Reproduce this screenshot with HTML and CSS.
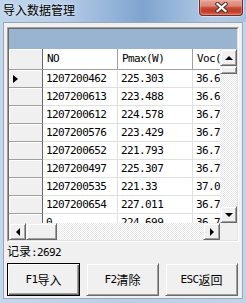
FILE: index.html
```html
<!DOCTYPE html>
<html>
<head>
<meta charset="utf-8">
<title>导入数据管理</title>
<link rel="stylesheet" href="styles.css">
</head>
<body>
<div class="window">
  <div class="titlebar">
    <span class="title">导入数据管理</span>
    <div class="close">
      <svg width="13" height="11" viewBox="0 0 13 11">
        <path d="M2.5 2l8 7M10.5 2l-8 7" stroke="#4a302c" stroke-width="4.2" stroke-linecap="square"/>
        <path d="M2.5 2l8 7M10.5 2l-8 7" stroke="#fff" stroke-width="2.2" stroke-linecap="square"/>
      </svg>
    </div>
  </div>
  <div class="client">
    <div class="grid">
      <div class="grid-in">
        <div class="caption"></div>
        <div class="main">
          <div class="rows">
            <div class="row head">
              <div class="rh"></div>
              <div class="c">NO</div>
              <div class="c">Pmax(W)</div>
              <div class="c">Voc(V)</div>
            </div>
            <div class="row"><div class="rh"><span class="mark"></span></div><div class="c">1207200462</div><div class="c">225.303</div><div class="c">36.69</div></div>
            <div class="row"><div class="rh"></div><div class="c">1207200613</div><div class="c">223.488</div><div class="c">36.62</div></div>
            <div class="row"><div class="rh"></div><div class="c">1207200612</div><div class="c">224.578</div><div class="c">36.72</div></div>
            <div class="row"><div class="rh"></div><div class="c">1207200576</div><div class="c">223.429</div><div class="c">36.74</div></div>
            <div class="row"><div class="rh"></div><div class="c">1207200652</div><div class="c">221.793</div><div class="c">36.7</div></div>
            <div class="row"><div class="rh"></div><div class="c">1207200497</div><div class="c">225.307</div><div class="c">36.77</div></div>
            <div class="row"><div class="rh"></div><div class="c">1207200535</div><div class="c">221.33</div><div class="c">37.09</div></div>
            <div class="row"><div class="rh"></div><div class="c">1207200654</div><div class="c">227.011</div><div class="c">36.79</div></div>
            <div class="row"><div class="rh"></div><div class="c">0</div><div class="c">224.699</div><div class="c">36.70</div></div>
          </div>
          <div class="vscroll">
            <div class="sbtn"><span class="arrow up"></span></div>
            <div class="thumb vthumb"></div>
            <div class="track"></div>
            <div class="sbtn"><span class="arrow down"></span></div>
          </div>
        </div>
        <div class="hbar">
          <div class="hscroll">
            <div class="sbtn"><span class="arrow left"></span></div>
            <div class="thumb hthumb"></div>
            <div class="track"></div>
            <div class="sbtn"><span class="arrow right"></span></div>
          </div>
          <div class="corner"></div>
        </div>
      </div>
    </div>
    <div class="count"><span class="zh">记录</span>:2692</div>
    <div class="buttons">
      <div class="btn default">F1<span class="zh">导入</span></div>
      <div class="btn">F2<span class="zh">清除</span></div>
      <div class="btn">ESC<span class="zh">返回</span></div>
    </div>
  </div>
</div>
</body>
</html>
```

FILE: styles.css
```css
body {
	margin: 0;
	background: #fff;
}
.window {
	width: 246px;
	height: 303px;
	display: flex;
	flex-direction: column;
	overflow: hidden;
	background: linear-gradient(90deg, #c3d7ed 0%, #b9cfe9 50%, #c0d5ec 100%);
}

/* title bar */
.titlebar {
	height: 22px;
	flex: none;
	display: flex;
	align-items: flex-start;
	background: linear-gradient(90deg, #c0d5ed 0%, #b6cde9 25%, #9ab8db 42%, #7fa4cf 58%, #98b7da 72%, #b2c9e5 86%, #a8c2e1 100%);
}
.title {
	padding: 2px 0 0 3px;
	font: 12px/16px "Noto Sans CJK SC", sans-serif;
	color: #000;
	text-shadow: 0 0 5px rgba(255, 255, 255, .8);
}
.close {
	margin-left: auto;
	margin-right: 3px;
	width: 44px;
	height: 16px;
	box-sizing: border-box;
	border: 1px solid #6e2c25;
	border-top: none;
	border-radius: 0 0 4px 4px;
	background: linear-gradient(#e3a497 0%, #d98676 40%, #c54a35 52%, #bf3b26 75%, #d5694f 100%);
	box-shadow: 0 0 0 1px rgba(255, 255, 255, .45), inset 0 0 1px 1px rgba(255, 200, 190, .35);
	display: flex;
	align-items: center;
	justify-content: center;
}

/* client area */
.client {
	flex: 1;
	margin: 0 3px 4px;
	padding: 4px 3px 2px;
	border: 1px solid #9aa6b5;
	background: #f0f0f0;
	display: flex;
	flex-direction: column;
}

/* data grid */
.grid {
	height: 215px;
	box-sizing: border-box;
	border: 1px solid;
	border-color: #a0a0a0 #fff #fff #a0a0a0;
}
.grid-in {
	height: 100%;
	box-sizing: border-box;
	border: 1px solid;
	border-color: #696969 #e3e3e3 #e3e3e3 #696969;
	display: flex;
	flex-direction: column;
}
.caption {
	height: 20px;
	background: #99b4d1;
}
.main {
	height: 174px;
	display: flex;
}
.rows {
	width: 211px;
	overflow: hidden;
	background: #fff;
}
.row {
	display: flex;
	height: 18px;
	font: 11px/17px "DejaVu Sans Mono", monospace;
	letter-spacing: -0.6px;
	color: #000;
}
.row.head {
	height: 21px;
	line-height: 20px;
}
.rh {
	width: 34px;
	flex: none;
	box-sizing: border-box;
	background: #f0f0f0;
	border-right: 1px solid #696969;
	border-bottom: 1px solid #a0a0a0;
	box-shadow: inset 1px 1px #fff;
	display: flex;
	align-items: center;
	padding-left: 4px;
}
.c {
	width: 75px;
	flex: none;
	box-sizing: border-box;
	padding-left: 3px;
	white-space: nowrap;
	overflow: hidden;
	border-right: 1px solid #e0e0e0;
	border-bottom: 1px solid #e0e0e0;
}
.head .c {
	padding-left: 4px;
	border-right-color: #a0a0a0;
	border-bottom-color: #a0a0a0;
}
.mark {
	width: 0;
	height: 0;
	border-left: 5px solid #000;
	border-top: 4px solid transparent;
	border-bottom: 4px solid transparent;
}

/* scroll bars */
.vscroll {
	width: 17px;
	display: flex;
	flex-direction: column;
}
.hbar {
	height: 17px;
	display: flex;
}
.hscroll {
	width: 211px;
	display: flex;
}
.corner {
	flex: 1;
	background: #f0f0f0;
}
.sbtn, .thumb, .btn {
	box-sizing: border-box;
	background: #f0f0f0;
	border: 1px solid;
	border-color: #f0f0f0 #696969 #696969 #f0f0f0;
	box-shadow: inset 1px 1px #fff, inset -1px -1px #a0a0a0;
}
.sbtn {
	width: 17px;
	height: 17px;
	flex: none;
	display: flex;
	align-items: center;
	justify-content: center;
}
.vthumb {
	height: 8px;
	flex: none;
}
.hthumb {
	width: 31px;
	flex: none;
}
.track {
	flex: 1;
	background: repeating-conic-gradient(#fff 0 25%, #e6e6e6 0 50%) 0 0 / 2px 2px;
}
.arrow {
	width: 0;
	height: 0;
}
.arrow.up {
	border-left: 4px solid transparent;
	border-right: 4px solid transparent;
	border-bottom: 4px solid #000;
}
.arrow.down {
	border-left: 4px solid transparent;
	border-right: 4px solid transparent;
	border-top: 4px solid #000;
}
.arrow.left {
	border-top: 4px solid transparent;
	border-bottom: 4px solid transparent;
	border-right: 4px solid #000;
}
.arrow.right {
	border-top: 4px solid transparent;
	border-bottom: 4px solid transparent;
	border-left: 4px solid #000;
}

/* bottom */
.zh {
	font: 12px "Noto Sans CJK SC", sans-serif;
	letter-spacing: 0;
}
.count {
	height: 14px;
	font: 11px/14px "DejaVu Sans Mono", monospace;
	letter-spacing: -0.6px;
	white-space: nowrap;
}
.buttons {
	margin-top: 7px;
	height: 33px;
	display: flex;
	gap: 6px;
}
.btn {
	width: 73px;
	display: flex;
	align-items: center;
	justify-content: center;
	font: 11px "DejaVu Sans Mono", monospace;
	letter-spacing: -0.6px;
	white-space: nowrap;
}
.btn.default {
	border-color: #000;
	box-shadow: inset 1px 1px #fff, inset -1px -1px #696969, inset -2px -2px #a0a0a0;
}
```
